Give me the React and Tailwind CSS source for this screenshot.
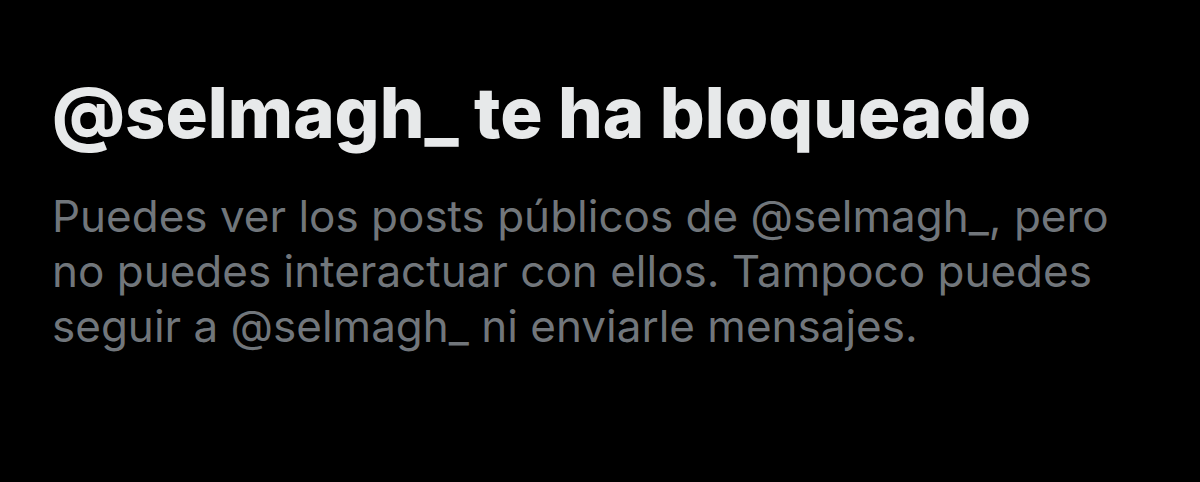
export default function App() {
  return (
    <div className="w-[1200px] h-[482px] bg-black overflow-hidden" style={{ fontFamily: 'Inter, "Liberation Sans", Arial, sans-serif' }}>
      <div className="pl-[52px] pt-[73px]">
        <h1 className="text-[70.5px] leading-[80px] font-extrabold text-[#e7e9ea]">
          @selmagh_ te ha bloqueado
        </h1>
        <p className="mt-[36px] text-[44px] leading-[55px] text-[#71767b]">
          <span className="block">Puedes ver los posts públicos de @selmagh_, pero</span>
          <span className="block">no puedes interactuar con ellos. Tampoco puedes</span>
          <span className="block">seguir a @selmagh_ ni enviarle mensajes.</span>
        </p>
      </div>
    </div>
  );
}
